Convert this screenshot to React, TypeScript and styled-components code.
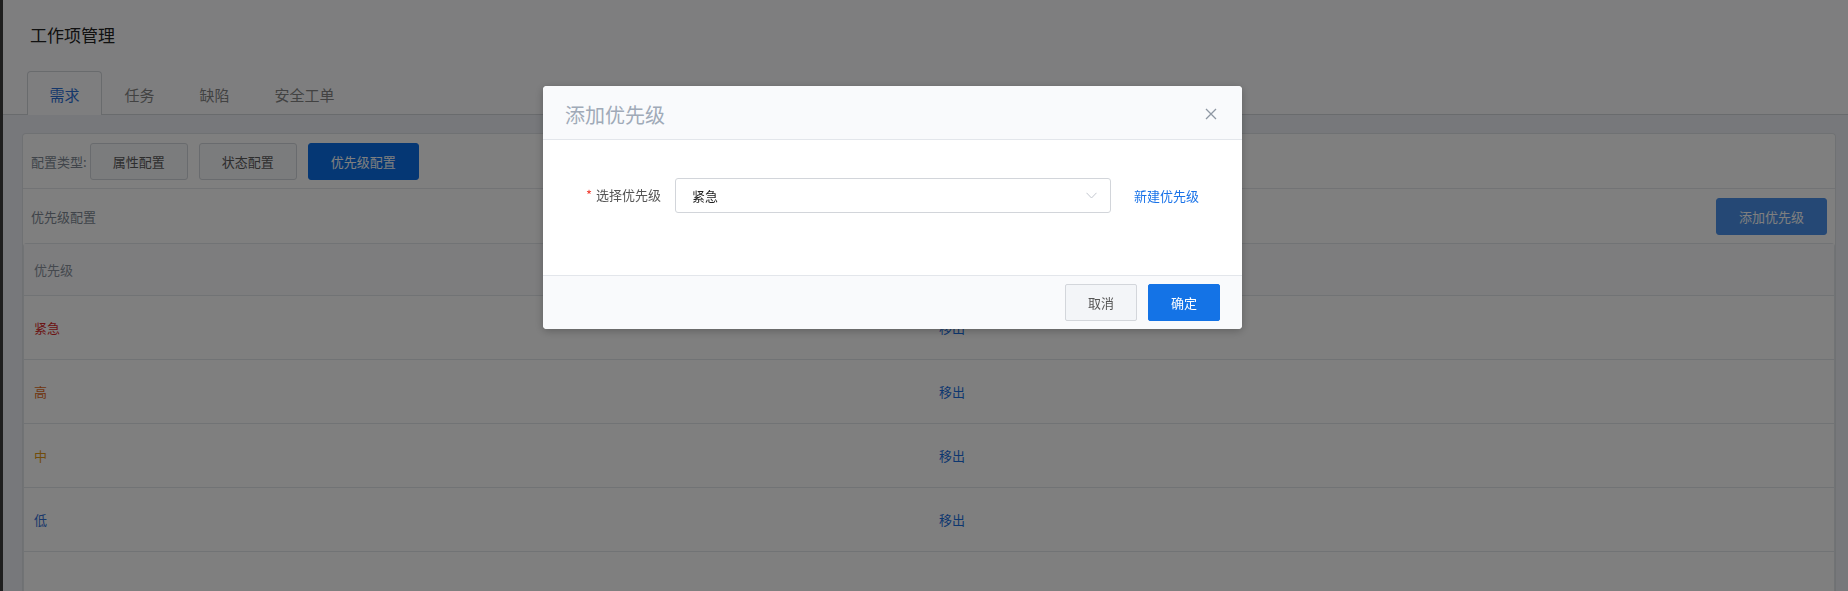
import React from "react";
import styled, { createGlobalStyle } from "styled-components";

const GlobalStyle = createGlobalStyle`
  html, body {
    margin: 0;
    padding: 0;
    overflow: hidden;
    background: #ffffff;
  }
  body {
    font-family: "Noto Sans CJK SC", "Noto Sans", sans-serif;
    font-size: 13px;
    color: #333;
  }
  * { box-sizing: border-box; }
`;

const Page = styled.div`
  display: flex;
  width: 100%;
  height: 591px;
  overflow: hidden;
`;

const DarkEdge = styled.div`
  width: 3px;
  flex: none;
  background: #3c3c3c;
`;

const Main = styled.div`
  flex: 1;
  display: flex;
  flex-direction: column;
  background: #fdfdff;
  min-width: 0;
`;

const TitleBar = styled.div`
  padding: 25px 0 0 27px;
  height: 45px;
  font-size: 17px;
  line-height: 20px;
  color: #222;
`;

const TabBar = styled.div`
  display: flex;
  align-items: flex-end;
  margin-top: 26px;
  height: 44px;
  padding-left: 24px;
  border-bottom: 1px solid #d3d6db;
`;

const Tab = styled.div<{ $active?: boolean }>`
  height: 44px;
  margin-bottom: -1px;
  padding: 2px 21.5px 0;
  display: flex;
  align-items: center;
  font-size: 15px;
  border: 1px solid ${(p) => (p.$active ? "#d3d6db" : "transparent")};
  border-bottom: none;
  border-radius: 4px 4px 0 0;
  background: ${(p) => (p.$active ? "#fdfdff" : "transparent")};
  color: ${(p) => (p.$active ? "#2a6fd6" : "#858585")};
`;

const Content = styled.div`
  flex: 1;
  background: #eef1f7;
  padding: 18px 12px 0 19px;
  display: flex;
  min-height: 0;
`;

const Panel = styled.div`
  flex: 1;
  background: #ffffff;
  border: 1px solid #dfe2e7;
  border-bottom: none;
  border-radius: 4px 4px 0 0;
  display: flex;
  flex-direction: column;
`;

const ConfigRow = styled.div`
  height: 55px;
  display: flex;
  align-items: center;
  padding: 0 8px;
  gap: 11px;
  border-bottom: 1px solid #e5e7eb;
`;

const ConfigLabel = styled.span`
  font-size: 13px;
  color: #808994;
  margin-right: -8px;
`;

const Button = styled.button<{ $variant?: "default" | "primary" | "light" }>`
  height: 37px;
  padding: 0 22px;
  font-family: inherit;
  font-size: 13px;
  border-radius: 3px;
  cursor: pointer;
  border: 1px solid
    ${(p) =>
      p.$variant === "primary" ? "#0a6fe8" : p.$variant === "light" ? "#4a91ea" : "#d3d6dc"};
  background: ${(p) =>
    p.$variant === "primary" ? "#0a6fe8" : p.$variant === "light" ? "#4a91ea" : "#f7f8fb"};
  color: ${(p) => (p.$variant === "default" || !p.$variant ? "#5a5a5a" : "#ffffff")};
`;

const SectionHeader = styled.div`
  height: 54px;
  display: flex;
  align-items: center;
  justify-content: space-between;
  padding: 0 8px;
`;

const SectionTitle = styled.span`
  font-size: 13px;
  color: #808994;
`;

const Table = styled.div`
  border: 1px solid #e3e6ea;
  border-bottom: none;
  border-radius: 4px 4px 0 0;
  flex: 1;
`;

const HeaderRow = styled.div`
  display: grid;
  grid-template-columns: 1fr 1fr;
  height: 52px;
  align-items: center;
  background: #fafbfd;
  border-bottom: 1px solid #e3e6ea;
  color: #8a929d;
`;

const Row = styled.div`
  display: grid;
  grid-template-columns: 1fr 1fr;
  height: 64px;
  align-items: center;
  border-bottom: 1px solid #e3e6ea;
`;

const Cell = styled.div<{ $color?: string }>`
  padding: 0 10px;
  font-size: 13px;
  color: ${(p) => p.$color || "inherit"};
`;

const LinkText = styled.span`
  color: #1a6fe0;
  font-size: 13px;
  cursor: pointer;
`;

const Overlay = styled.div`
  position: fixed;
  inset: 0;
  background: rgba(0, 0, 0, 0.5);
`;

const Modal = styled.div`
  position: absolute;
  left: 543px;
  top: 86px;
  width: 699px;
  height: 243px;
  background: #ffffff;
  border-radius: 4px;
  box-shadow: 0 2px 8px rgba(0, 0, 0, 0.25);
  display: flex;
  flex-direction: column;
  overflow: hidden;
`;

const ModalHeader = styled.div`
  height: 54px;
  flex: none;
  display: flex;
  align-items: center;
  justify-content: space-between;
  padding: 3px 25px 0 22px;
  background: #f9fafc;
  border-bottom: 1px solid #e3e6eb;
`;

const ModalTitle = styled.span`
  font-size: 20px;
  color: #a0aab8;
`;

const CloseButton = styled.span`
  display: flex;
  width: 12px;
  height: 12px;
  color: #8e97a3;
  cursor: pointer;
`;

const ModalBody = styled.div`
  flex: 1;
  padding: 38px 0 0 43px;
`;

const FormRow = styled.div`
  display: flex;
  align-items: center;
  height: 35px;
`;

const FormLabel = styled.label`
  display: flex;
  align-items: center;
  gap: 4px;
  font-size: 13px;
  color: #555;
  width: 89px;
  margin-bottom: 2px;
`;

const Required = styled.span`
  color: #f04134;
  font-size: 13px;
`;

const Select = styled.div`
  width: 436px;
  height: 35px;
  border: 1px solid #d2d5da;
  border-radius: 3px;
  display: flex;
  align-items: center;
  justify-content: space-between;
  padding: 0 13px 0 16px;
  font-size: 13px;
  color: #222;
  background: #fff;
`;

const Chevron = styled.svg`
  width: 11px;
  height: 7px;
`;

const NewLink = styled.span`
  margin-left: 23px;
  font-size: 13px;
  color: #1a73e8;
  cursor: pointer;
`;

const ModalFooter = styled.div`
  height: 54px;
  flex: none;
  display: flex;
  justify-content: flex-end;
  align-items: flex-start;
  gap: 11px;
  padding: 8px 22px 0 0;
  background: #f9fafc;
  border-top: 1px solid #e3e6eb;
`;

const FooterButton = styled.button<{ $primary?: boolean }>`
  height: 37px;
  padding: 0 22px;
  font-family: inherit;
  font-size: 13px;
  border-radius: 2px;
  cursor: pointer;
  border: 1px solid ${(p) => (p.$primary ? "#1473e6" : "#d3d6db")};
  background: ${(p) => (p.$primary ? "#1473e6" : "#f3f5f8")};
  color: ${(p) => (p.$primary ? "#ffffff" : "#555")};
`;

const priorities = [
  { name: "紧急", color: "#d92a2a" },
  { name: "高", color: "#e06b1c" },
  { name: "中", color: "#e39a16" },
  { name: "低", color: "#3470d6" },
];

export default function App() {
  return (
    <>
      <GlobalStyle />
      <Page>
        <DarkEdge />
        <Main>
          <TitleBar>工作项管理</TitleBar>
          <TabBar>
            <Tab $active>需求</Tab>
            <Tab>任务</Tab>
            <Tab>缺陷</Tab>
            <Tab>安全工单</Tab>
          </TabBar>
          <Content>
            <Panel>
              <ConfigRow>
                <ConfigLabel>配置类型:</ConfigLabel>
                <Button>属性配置</Button>
                <Button>状态配置</Button>
                <Button $variant="primary">优先级配置</Button>
              </ConfigRow>
              <SectionHeader>
                <SectionTitle>优先级配置</SectionTitle>
                <Button $variant="light">添加优先级</Button>
              </SectionHeader>
              <Table>
                <HeaderRow>
                  <Cell>优先级</Cell>
                  <Cell />
                </HeaderRow>
                {priorities.map((p) => (
                  <Row key={p.name}>
                    <Cell $color={p.color}>{p.name}</Cell>
                    <Cell>
                      <LinkText>移出</LinkText>
                    </Cell>
                  </Row>
                ))}
              </Table>
            </Panel>
          </Content>
        </Main>
      </Page>
      <Overlay>
        <Modal>
          <ModalHeader>
            <ModalTitle>添加优先级</ModalTitle>
            <CloseButton>
              <svg width="12" height="12" viewBox="0 0 12 12">
                <path d="M1 1 L11 11 M11 1 L1 11" stroke="currentColor" strokeWidth="1.3" fill="none" />
              </svg>
            </CloseButton>
          </ModalHeader>
          <ModalBody>
            <FormRow>
              <FormLabel>
                <Required>*</Required>
                选择优先级
              </FormLabel>
              <Select>
                <span>紧急</span>
                <Chevron viewBox="0 0 11 7">
                  <path d="M0.5 0.8 L5.5 6 L10.5 0.8" stroke="#c3c7cf" strokeWidth="1" fill="none" />
                </Chevron>
              </Select>
              <NewLink>新建优先级</NewLink>
            </FormRow>
          </ModalBody>
          <ModalFooter>
            <FooterButton>取消</FooterButton>
            <FooterButton $primary>确定</FooterButton>
          </ModalFooter>
        </Modal>
      </Overlay>
    </>
  );
}
